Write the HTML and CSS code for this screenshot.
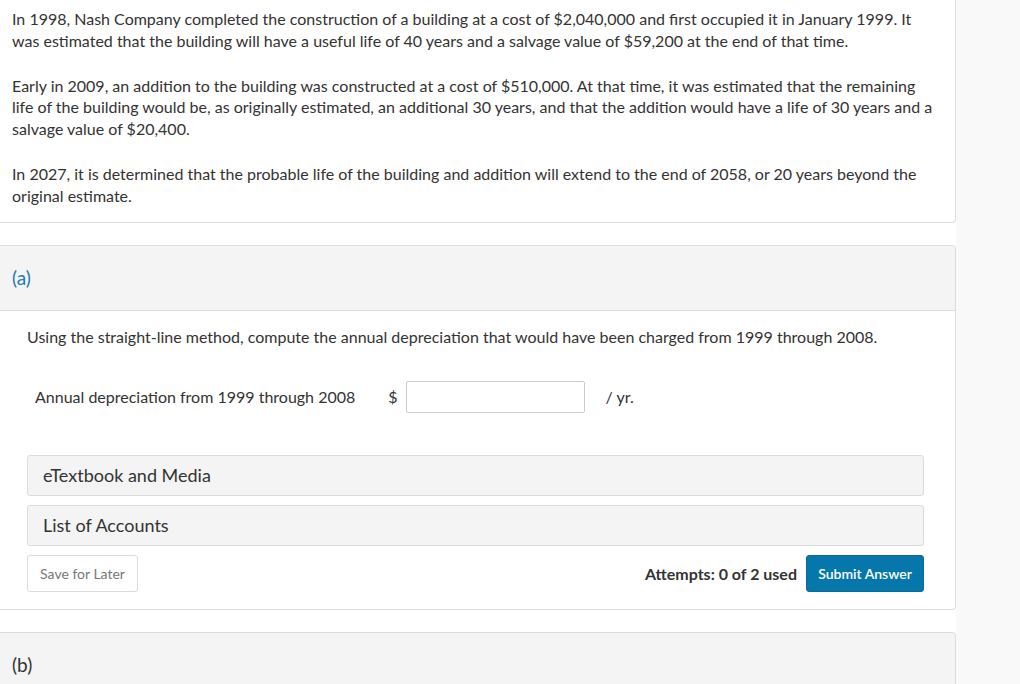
FILE: index.html
```html
<!DOCTYPE html>
<html>
<head>
<meta charset="utf-8">
<link rel="stylesheet" href="styles.css">
</head>
<body>
<div class="page">
  <main class="main">
    <section class="card intro">
      <p>In 1998, Nash Company completed the construction of a building at a cost of $2,040,000 and first occupied it in January 1999. It was estimated that the building will have a useful life of 40 years and a salvage value of $59,200 at the end of that time.</p>
      <p>Early in 2009, an addition to the building was constructed at a cost of $510,000. At that time, it was estimated that the remaining life of the building would be, as originally estimated, an additional 30 years, and that the addition would have a life of 30 years and a salvage value of $20,400.</p>
      <p>In 2027, it is determined that the probable life of the building and addition will extend to the end of 2058, or 20 years beyond the original estimate.</p>
    </section>

    <section class="card part">
      <div class="part-head"><span class="part-label active">(a)</span></div>
      <div class="part-body">
        <p class="question">Using the straight-line method, compute the annual depreciation that would have been charged from 1999 through 2008.</p>
        <div class="answer-row">
          <span class="answer-label">Annual depreciation from 1999 through 2008</span>
          <span class="currency">$</span>
          <input class="answer-input" type="text" aria-label="Annual depreciation">
          <span class="unit">/ yr.</span>
        </div>
        <div class="resource">eTextbook and Media</div>
        <div class="resource">List of Accounts</div>
        <div class="actions">
          <button class="btn-save">Save for Later</button>
          <div class="actions-right">
            <span class="attempts">Attempts: 0 of 2 used</span>
            <button class="btn-submit">Submit Answer</button>
          </div>
        </div>
      </div>
    </section>

    <section class="card part">
      <div class="part-head"><span class="part-label">(b)</span></div>
    </section>
  </main>
  <aside class="side"></aside>
</div>
</body>
</html>
```

FILE: styles.css
```css
* { box-sizing: border-box; }
html, body { margin: 0; padding: 0; }
body {
  font-family: Lato, "Open Sans", "Liberation Sans", sans-serif;
  color: #333;
  font-size: 16px;
  line-height: 21.8px;
  background: #f9f9f9;
}
.page {
  display: flex;
  height: 684px;
  overflow: hidden;
}
.main {
  width: 956px;
  background: #fff;
  display: flex;
  flex-direction: column;
  gap: 22px;
}
.side { flex: 1; background: #f9f9f9; }

.card {
  border: 1px solid #dcdcdc;
  border-left: none;
  border-radius: 0 4px 4px 0;
  background: #fff;
}
.intro {
  border-top: none;
  border-radius: 0 0 4px 0;
  padding: 8px 18px 15px 12px;
}
.intro p { margin: 0 0 23px; }
.intro p:last-child { margin-bottom: 0; }

.part-head {
  background: #f4f4f4;
  height: 65px;
  border-bottom: 1px solid #dcdcdc;
  border-radius: 0 4px 0 0;
  padding: 0 12px;
  display: flex;
  align-items: center;
}
.part-label { font-size: 19px; color: #333; }
.part-label.active { color: #1f78b4; }

.part-body { padding: 15px 31px 17px 27px; }
.question { margin: 0; }
.answer-row {
  display: flex;
  align-items: center;
  margin-top: 34px;
  padding-left: 8px;
  height: 32px;
}
.answer-label { margin-right: 33px; }
.currency { margin-right: 8px; }
.answer-input {
  width: 179px;
  height: 32px;
  border: 1px solid #ccc;
  border-radius: 2px;
  font: inherit;
  padding: 0 6px;
  margin-right: 21px;
}
.resource {
  margin-top: 9px;
  height: 41px;
  background: #f4f4f4;
  border: 1px solid #dcdcdc;
  border-radius: 3px;
  padding: 0 15px;
  font-size: 18px;
  display: flex;
  align-items: center;
}
.answer-row + .resource { margin-top: 42px; }
.actions {
  margin-top: 9px;
  display: flex;
  justify-content: space-between;
  align-items: center;
}
.actions-right { display: flex; align-items: center; gap: 9px; }
.btn-save {
  width: 111px;
  height: 37px;
  background: #fff;
  border: 1px solid #dcdcdc;
  border-radius: 3px;
  color: #777;
  font-family: inherit;
  font-size: 14px;
  cursor: pointer;
}
.attempts { font-weight: 700; font-size: 16px; }
.btn-submit {
  width: 118px;
  height: 37px;
  background: #0677aa;
  border: 1px solid #056c9b;
  border-radius: 3px;
  color: #fff;
  font-family: inherit;
  font-weight: 600;
  font-size: 14px;
  cursor: pointer;
}
```
